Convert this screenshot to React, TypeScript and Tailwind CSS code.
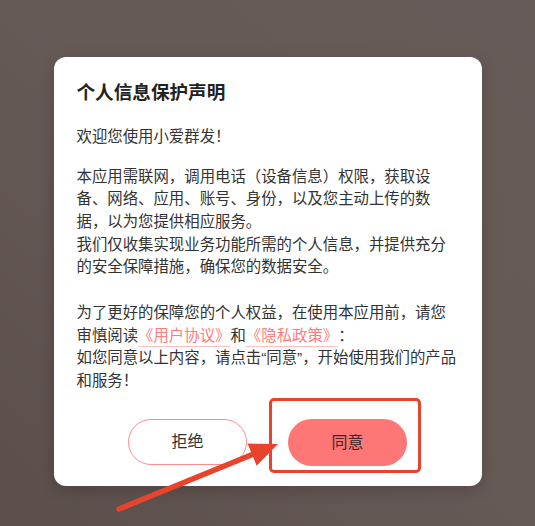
import React from 'react'

const FONT = "font-['Liberation_Sans','Noto_Sans_CJK_SC',sans-serif]"

const PrivacyDialog = () => {
  return (
    <div className={`w-[428px] rounded-[12px] bg-white pl-[23px] pr-[23px] pt-[23px] pb-[20px] shadow-[0_4px_16px_rgba(0,0,0,0.18)] text-[#333] [text-spacing-trim:space-all] ${FONT}`}>
      <h3 className="text-[18.6px] font-bold leading-[26px] text-[#222]">个人信息保护声明</h3>

      <div className="mt-[19.6px] text-[15.4px] leading-[22.7px]">
        <p>欢迎您使用小爱群发！</p>
        <p className="mt-[17.3px]">
          本应用需联网，调用电话（设备信息）权限，获取设备、网络、应用、账号、身份，以及您主动上传的数据，以为您提供相应服务。
          <br />
          我们仅收集实现业务功能所需的个人信息，并提供充分的安全保障措施，确保您的数据安全。
        </p>
        <p className="mt-[22.7px]">
          为了更好的保障您的个人权益，在使用本应用前，请您审慎阅读
          <a className="text-[#ff7c7c] underline decoration-[#ffc0c0] underline-offset-[5px]">《用户协议》</a>
          和
          <a className="text-[#ff7c7c] underline decoration-[#ffc0c0] underline-offset-[5px]">《隐私政策》</a>
          ：
          <br />
          如您同意以上内容，请点击“同意”，开始使用我们的产品和服务！
        </p>
      </div>

      <div className="mt-[26.7px] flex justify-center gap-[41px]">
        <button className="h-[46px] w-[119px] rounded-full border border-[#ff8c8c] bg-white text-[16px] text-[#333]">
          拒绝
        </button>
        <button className="h-[47px] w-[119px] rounded-full bg-[#ff7676] text-[16px] text-[#3a2626]">
          同意
        </button>
      </div>
    </div>
  )
}

export default function App() {
  return (
    <div className="relative h-[526px] w-full overflow-hidden bg-gradient-to-tr from-[#5b4e4b] via-[#665a57] to-[#675b58]">
      <div className="flex justify-center pt-[57px]">
        <PrivacyDialog />
      </div>

      {/* callout around the agree button */}
      <div className="absolute left-[269px] top-[398px] h-[75px] w-[152px] rounded-[5px] border-[3px] border-[#e8432c]" />
      <svg className="absolute left-0 top-0" width="535" height="526" viewBox="0 0 535 526">
        <line x1="119" y1="509" x2="256" y2="453" stroke="#e8432c" strokeWidth="5.5" strokeLinecap="round" />
        <polygon points="278,444 247.5,443.6 256.7,465.8" fill="#e8432c" />
      </svg>
    </div>
  )
}
